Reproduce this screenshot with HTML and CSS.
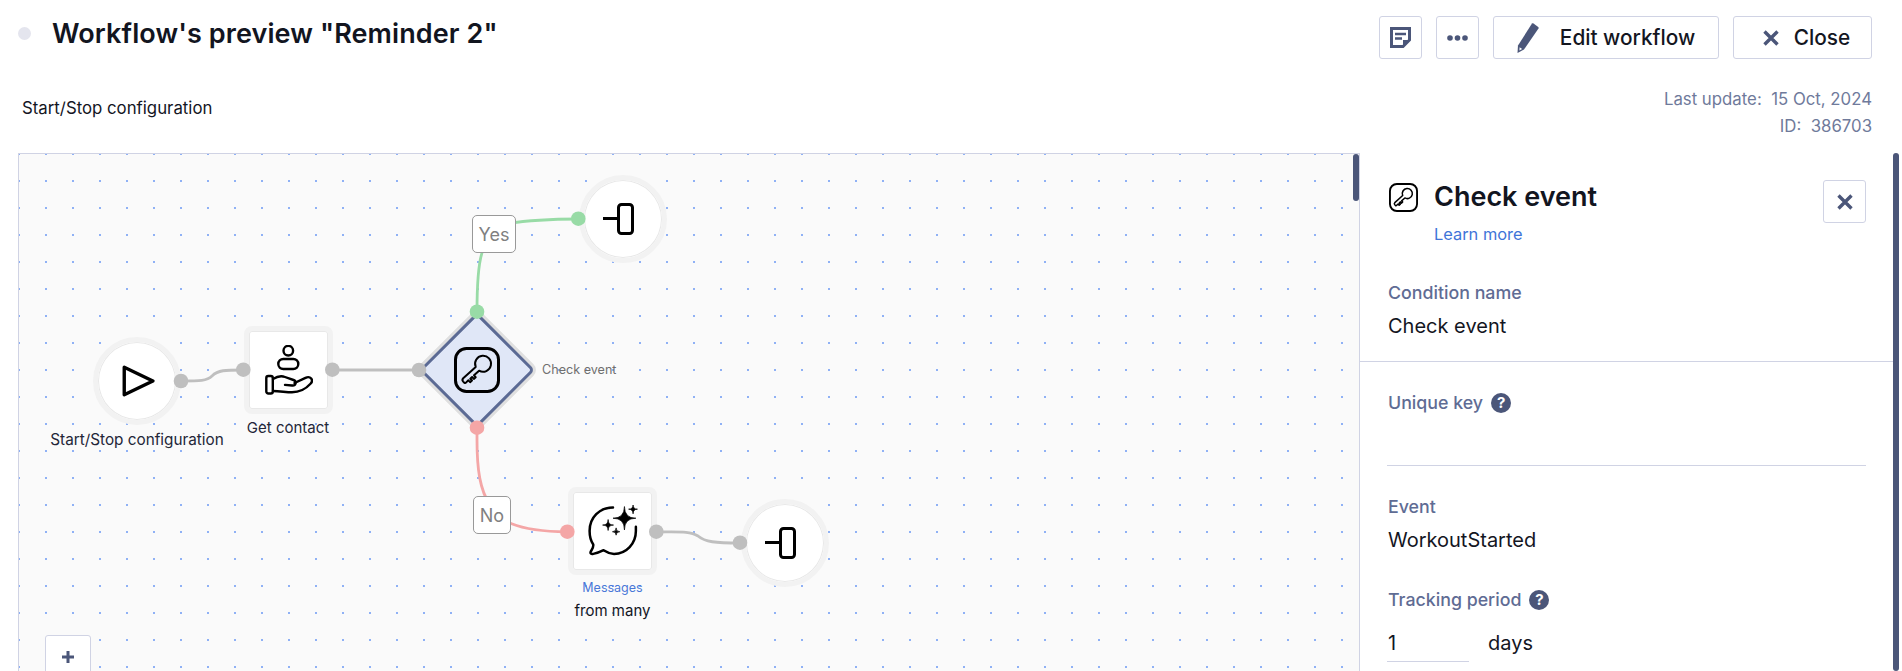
FILE: index.html
```html
<!DOCTYPE html>
<html lang="en">
<head>
  <meta charset="UTF-8" />
  <title>Workflow's preview</title>
  <link rel="stylesheet" href="styles.css">
</head>
<body>
  <header class="top">
    <div class="top-left">
      <div class="title-row">
        <span class="status-dot"></span>
        <h1>Workflow's preview "Reminder 2"</h1>
      </div>
      <div class="subtitle">Start/Stop configuration</div>
    </div>
    <div class="top-right">
      <div class="actions">
        <button class="btn btn-icon">
          <svg class="icon-note" viewBox="0 0 21 21"><path d="M1.500 1.500h18v11.500l-6.500 6.500h-11.500z" fill="none" stroke="#4b5679" stroke-width="3"/><path d="M13 19.500v-6.500h6.500z" fill="#4b5679"/><path d="M5 7h11M5 11.500h7" stroke="#4b5679" stroke-width="2.400"/></svg>
        </button>
        <button class="btn btn-icon">
          <svg class="icon-more" viewBox="0 0 21 6"><circle cx="3" cy="3" r="2.800"/><circle cx="10.500" cy="3" r="2.800"/><circle cx="18" cy="3" r="2.800"/></svg>
        </button>
        <button class="btn btn-edit">
          <svg class="icon-pencil" viewBox="0 0 22 30"><path d="M15 .5c.6-.3 1-.2 1.500.1l4.700 3.400c.5.4.6.9.3 1.400L7 26.500 .5 30 1 22.500z" fill="#4b5679"/><path d="M2.600 24.200l-.2 3.300 2.800-1.500z" fill="#fff"/></svg>
          <span>Edit workflow</span>
        </button>
        <button class="btn btn-close">
          <svg class="icon-x" viewBox="0 0 16 16"><path d="M1.500 1.500l13 13M14.500 1.500l-13 13" stroke="#4b5679" stroke-width="3.400"/></svg>
          <span>Close</span>
        </button>
      </div>
      <div class="meta">Last update:&nbsp; 15 Oct, 2024</div>
      <div class="meta">ID:&nbsp; 386703</div>
    </div>
  </header>

  <main class="main">
    <section class="canvas">
      <div class="node node-round node-start">
        <svg class="icon-play" viewBox="-2 0 33 30"><path d="M2 2L29 15 2 28z" fill="none" stroke="#000" stroke-width="3.200" stroke-linejoin="round"/></svg>
      </div>
      <div class="node-label label-start">Start/Stop configuration</div>

      <div class="node node-square node-contact">
        <svg class="icon-hand" viewBox="0 0 48 50" fill="none" stroke="#000" stroke-width="2.400" stroke-linecap="round" stroke-linejoin="round">
          <circle cx="23.300" cy="5.700" r="4.800"/>
          <rect x="13.300" y="14" width="20" height="10" rx="5"/>
          <rect x="1.300" y="31" width="6.500" height="17.500" rx="2"/>
          <path d="M8 34c4-2.500 8-3.500 12-2l8.500 3c3.500 1.300 2.500 6-1.500 5.500l-7-.6"/>
          <path d="M29.500 38l11-5.200c5-2.300 8.500 2.300 5 6-5 5.500-11.500 8.500-18.500 8.500-6 0-12-1.300-19-1.300"/>
        </svg>
      </div>
      <div class="node-label label-contact">Get contact</div>

      <div class="diamond"></div>
      <svg class="icon-key key-large" viewBox="0 0 46 46" fill="none" stroke="#000" stroke-linejoin="round">
        <rect x="1.500" y="1.500" width="43" height="43" rx="11" stroke-width="3"/>
        <path d="M21.700 19.900L9.200 31.200Q7.600 32.900 9.200 34.600L10.300 35.700Q11.300 36.400 12.200 35.400L14.400 33.300 16.100 35.200 18 33.500 16.300 31.700 18.100 30 19.800 31.900 21.700 30.200 20 28.300 25.100 23.700A8 8 0 1 0 21.700 19.900z" stroke-width="2"/>
      </svg>
      <div class="diamond-label">Check event</div>

      <div class="node node-round node-end-top">
        <svg class="icon-end" viewBox="0 0 31 32" fill="none" stroke="#000" stroke-width="3"><path d="M0 15.500h15.500"/><rect x="15.500" y="1.500" width="14" height="29" rx="3"/></svg>
      </div>

      <div class="node node-square node-messages">
        <svg class="icon-chat" viewBox="0 0 48 50">
          <path d="M24 2.500C11 2.500 1.500 12 1.500 25c0 6 1.500 10 3.500 13 .5 3-1.500 5-2.500 7-.5 1.500.5 2.500 2.500 2 4-.5 7-2 10-3.500 3 2 5 3.500 10 3.500 12 0 21-10 21-22v-4" fill="none" stroke="#000" stroke-width="2.400" stroke-linecap="round" stroke-linejoin="round"/>
          <path d="M35 1.500Q35 12.700 46 12.700 35 12.700 35 24 35 12.700 24 12.700 35 12.700 35 1.500zM43.300 0Q43.300 4 47.500 4 43.300 4 43.300 8.500 43.300 4 39 4 43.300 4 43.300 0zM19.300 14Q19.300 19.300 24.500 19.300 19.300 19.300 19.300 24.500 19.300 19.300 14 19.300 19.300 19.300 19.300 14zM27 22Q27 25.700 30.500 25.700 27 25.700 27 29 27 25.700 23.500 25.700 27 25.700 27 22z" fill="#000" stroke="#000" stroke-width=".7"/>
        </svg>
      </div>
      <div class="node-label label-link">Messages</div>
      <div class="node-label label-many">from many</div>

      <div class="node node-round node-end-bottom">
        <svg class="icon-end" viewBox="0 0 31 32" fill="none" stroke="#000" stroke-width="3"><path d="M0 15.500h15.500"/><rect x="15.500" y="1.500" width="14" height="29" rx="3"/></svg>
      </div>

      <svg class="edges" viewBox="19 154 1340 517">
        <g fill="none" stroke-width="2.800">
          <path stroke="#bfbfbf" d="M181 381C200 381 207 381 212 376 218 370 225 370 243 370"/>
          <path stroke="#bfbfbf" d="M332 370H419"/>
          <path stroke="#98dba6" d="M477 312C477 285 478 262 483 250"/>
          <path stroke="#98dba6" d="M500 225C520 221 550 219 578 219"/>
          <path stroke="#f4a6a6" d="M477 428V440C477 470 480 490 490 505 497 520 515 531 567 532"/>
          <path stroke="#bfbfbf" d="M656 532C680 532 690 531 698 536 705 542 715 543 740 543"/>
        </g>
        <circle class="handle-grey" cx="181" cy="381" r="7.300"/>
        <circle class="handle-grey" cx="243.300" cy="369.700" r="7.300"/>
        <circle class="handle-grey" cx="332.300" cy="369.700" r="7.300"/>
        <circle class="handle-grey" cx="419" cy="370" r="7.300"/>
        <circle class="handle-green" cx="477" cy="311.700" r="7.300"/>
        <circle class="handle-red" cx="477" cy="427.700" r="7.300"/>
        <circle class="handle-green" cx="578.300" cy="218.700" r="7.300"/>
        <circle class="handle-red" cx="567.300" cy="531.700" r="7.300"/>
        <circle class="handle-grey" cx="656.300" cy="531.700" r="7.300"/>
        <circle class="handle-grey" cx="740" cy="542.700" r="7.300"/>
      </svg>

      <div class="edge-label edge-yes">Yes</div>
      <div class="edge-label edge-no">No</div>

      <div class="zoom-btn">
        <svg class="icon-plus" viewBox="0 0 12 12"><path d="M6 0v12M0 6h12" stroke="#4b5679" stroke-width="3"/></svg>
      </div>
      <div class="scroll-thumb canvas-thumb"></div>
    </section>

    <aside class="panel">
      <div class="panel-head">
        <div class="panel-title-wrap">
          <div class="panel-title">
            <svg class="icon-key key-small" viewBox="0 0 46 46" fill="none" stroke="#000" stroke-linejoin="round">
              <rect x="1.500" y="1.500" width="43" height="43" rx="11" stroke-width="3"/>
              <path d="M21.700 19.900L9.200 31.200Q7.600 32.900 9.200 34.600L10.300 35.700Q11.300 36.400 12.200 35.400L14.400 33.300 16.100 35.200 18 33.500 16.300 31.700 18.100 30 19.800 31.900 21.700 30.200 20 28.300 25.100 23.700A8 8 0 1 0 21.700 19.900z" stroke-width="2.400"/>
            </svg>
            <h2>Check event</h2>
          </div>
          <a class="learn-more">Learn more</a>
        </div>
        <button class="btn btn-icon">
          <svg class="icon-x" viewBox="0 0 16 16"><path d="M1.500 1.500l13 13M14.500 1.500l-13 13" stroke="#4b5679" stroke-width="3.400"/></svg>
        </button>
      </div>
      <div class="field-name">
        <div class="field-label">Condition name</div>
        <div class="field-value">Check event</div>
      </div>
      <div class="panel-body">
        <div class="field-label">Unique key <span class="help">?</span></div>
        <div class="empty-input"></div>
        <div class="field-label label-event">Event</div>
        <div class="field-value">WorkoutStarted</div>
        <div class="field-label label-period">Tracking period <span class="help">?</span></div>
        <div class="period-row">
          <div class="period-input">1</div>
          <span>days</span>
        </div>
      </div>
      <div class="scroll-thumb panel-thumb"></div>
    </aside>
  </main>
</body>
</html>
```

FILE: styles.css
```css
* { box-sizing: border-box; }
html, body { height: 671px; overflow: hidden; }
body { margin: 0; font-family: Inter, "Liberation Sans", sans-serif; color: #14161f; background: #fff; }
h1, h2 { margin: 0; font-weight: 600; }

.top { display: flex; justify-content: space-between; height: 153px; padding-right: 30px; }
.top-left { padding: 15px 0 0 18px; }
.title-row { display: flex; align-items: center; height: 37px; }
.status-dot { width: 13px; height: 13px; border-radius: 50%; background: #e4e5ee; margin-right: 21px; }
h1 { font-size: 27px; line-height: 37px; letter-spacing: .1px; color: #12151f; }
.subtitle { margin: 44px 0 0 4px; font-size: 16.8px; line-height: 24px; color: #14161f; }

.top-right { padding-top: 16px; text-align: right; }
.actions { display: flex; gap: 14px; margin-bottom: 27px; }
.btn { display: flex; align-items: center; justify-content: center; height: 43px; padding: 0; background: #fff; border: 1px solid #d0d3e4; border-radius: 3px; font: 500 20.800px Inter, sans-serif; color: #14161f; }
.btn-icon { width: 43px; }
.btn-edit { width: 226px; gap: 21px; }
.btn-close { width: 139px; gap: 15px; padding-left: 8px; }
.icon-note { width: 21px; height: 21px; }
.icon-more { width: 21px; height: 6px; fill: #4b5679; }
.icon-pencil { width: 22px; height: 30px; }
.icon-x { width: 16px; height: 16px; }
.meta { font-size: 16.8px; line-height: 27px; color: #6f7a9b; }

.main { display: flex; height: 518px; }
.canvas { position: relative; flex: none; width: 1342px; height: 518px; margin-left: 18px; border: 1px solid #d0d3e4; border-bottom: 0; overflow: hidden; background-color: #fafafa; background-image: radial-gradient(circle at 1px 1px, #8fb1f5 1px, transparent 1.2px); background-size: 27px 27px; background-position: -1px -1px; }
.edges { position: absolute; left: 0; top: 0; width: 1340px; height: 517px; }
.handle-grey { fill: #bfbfbf; }
.handle-green { fill: #98dba6; }
.handle-red { fill: #f4a6a6; }

.node { position: absolute; display: flex; align-items: center; justify-content: center; background: #fff; border: 5px solid #f2f2f2; box-shadow: inset 0 0 0 1px #e8e8e8; }
.node-round { width: 88px; height: 88px; border-radius: 50%; }
.node-square { width: 89px; height: 88px; border-radius: 8px; }
.node-start { left: 74px; top: 183px; }
.node-end-top { left: 560px; top: 21px; }
.node-end-bottom { left: 722px; top: 345px; }
.node-contact { left: 225px; top: 172px; }
.node-messages { left: 549px; top: 333px; }
.icon-play { width: 35px; height: 32px; }
.icon-end { width: 31px; height: 32px; margin-left: -10px; }
.icon-hand { width: 48px; height: 50px; }
.icon-chat { width: 50px; height: 52px; }

.diamond { position: absolute; left: 417px; top: 175px; width: 82px; height: 82px; transform: rotate(45deg); background: #e0e7f7; border: 3px solid #5b6a94; border-radius: 5px; box-shadow: 0 0 0 3px #dfdfdf; }
.key-large { position: absolute; left: 435px; top: 193px; width: 46px; height: 46px; }
.key-small { width: 29px; height: 29px; margin-left: 1px; }

.node-label { position: absolute; text-align: center; white-space: nowrap; font-size: 15px; line-height: 20px; color: #232638; }
.label-start { left: 31px; top: 276px; width: 174px; font-size: 15.300px; }
.label-contact { left: 225px; top: 264px; width: 88px; }
.label-link { left: 549px; top: 424px; width: 89px; font-size: 12.500px; color: #4a78d8; }
.label-many { left: 549px; top: 447px; width: 89px; color: #14161f; }
.diamond-label { position: absolute; left: 523px; top: 208px; font-size: 12.600px; line-height: 16px; white-space: nowrap; color: #6f6f6f; }

.edge-label { position: absolute; display: flex; align-items: center; justify-content: center; background: #fff; border: 1.500px solid #999; border-radius: 5px; font-size: 18px; color: #808080; }
.edge-yes { left: 453px; top: 61px; width: 44px; height: 38px; }
.edge-no { left: 454px; top: 342px; width: 38px; height: 38px; }

.zoom-btn { position: absolute; left: 26px; top: 481px; width: 46px; height: 50px; padding-top: 15px; text-align: center; background: #fff; border: 1px solid #d0d3e4; border-radius: 3px; }
.icon-plus { display: block; width: 12px; height: 12px; margin: 0 auto; }
.scroll-thumb { position: absolute; top: 0; width: 6px; background: #4b5679; border-radius: 3px; }
.canvas-thumb { right: 0; height: 47px; }

.panel { position: relative; flex: 1; overflow: hidden; padding-right: 9px; }
.panel-thumb { right: 3px; height: 518px; }
.panel-head { display: flex; justify-content: space-between; padding: 27px 27px 0 28px; }
.panel-title { display: flex; align-items: center; gap: 16px; height: 34px; }
h2 { font-size: 27px; line-height: 34px; color: #12151f; }
.learn-more { display: block; margin: 8px 0 0 46px; font-size: 16.400px; line-height: 24px; color: #3f74d8; }
.field-name { padding: 35px 0 20px 28px; border-bottom: 1px solid #d0d3e4; }
.field-label { display: flex; align-items: center; gap: 8px; font-size: 17.800px; line-height: 24px; font-weight: 500; color: #5f6c94; }
.field-value { margin-top: 6px; font-size: 20px; line-height: 30px; color: #14161f; }
.help { display: inline-block; width: 20px; height: 20px; border-radius: 50%; background: #4b5679; color: #fff; text-align: center; font-size: 15px; line-height: 20px; font-weight: 700; }
.panel-body { padding: 29px 27px 0 28px; }
.empty-input { height: 51px; border-bottom: 1px solid #d0d3e4; margin-left: -1px; }
.label-event { margin-top: 29px; }
.label-period { margin-top: 33px; }
.period-row { display: flex; margin-top: 16px; font-size: 20px; line-height: 30px; }
.period-input { width: 82px; height: 34px; margin: 0 19px 0 -1px; padding-left: 1px; border-bottom: 1px solid #d0d3e4; }
```
